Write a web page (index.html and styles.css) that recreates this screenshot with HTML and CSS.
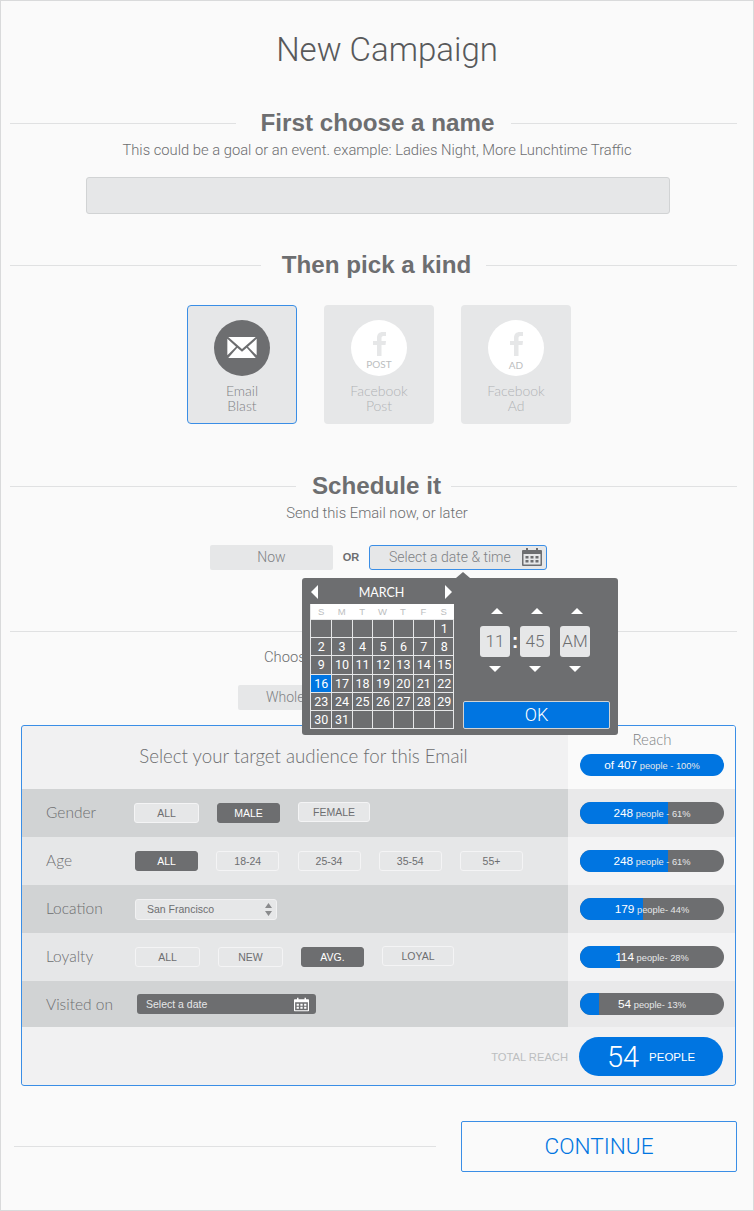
FILE: index.html
```html
<!DOCTYPE html>
<html lang="en">
<head>
    <meta charset="UTF-8">
    <meta name="viewport" content="width=device-width, initial-scale=1.0">
    <title>New Campaign</title>
    <link rel="stylesheet" href="styles.css">
</head>
<body>
<div class="page">
    <h1 class="page-title">New Campaign</h1>

    <!-- name -->
    <h2 class="step-head step-name"><span>First choose a name</span></h2>
    <p class="step-sub">This could be a goal or an event. example: Ladies Night, More Lunchtime Traffic</p>
    <div class="name-input"></div>

    <!-- kind -->
    <h2 class="step-head step-kind"><span>Then pick a kind</span></h2>
    <div class="kinds">
        <div class="kind kind-on">
            <div class="kind-icon icon-dark">
                <svg width="30" height="22" viewBox="0 0 32 24"><path fill="#fff" d="M1 0h30L16 13zM0 2l9.500 8.500L0 20zM32 2v18l-9.500-9.500zM10.800 11.700 16 16l5.200-4.300L31 23H1z"/></svg>
            </div>
            <div class="kind-label">Email<br>Blast</div>
        </div>
        <div class="kind">
            <div class="kind-icon">
                <svg class="fb" width="13" height="24" viewBox="0 0 13 24"><path fill="#e6e7e8" d="M4 24V13H0V9h4V6c0-4 2-6 6-6h3v4h-2C9.500 4 8.500 4.500 8.500 6v3H13l-.5 4h-4v11z"/></svg>
                <span class="fb-tag">POST</span>
            </div>
            <div class="kind-label">Facebook<br>Post</div>
        </div>
        <div class="kind">
            <div class="kind-icon">
                <svg class="fb" width="13" height="24" viewBox="0 0 13 24"><path fill="#e6e7e8" d="M4 24V13H0V9h4V6c0-4 2-6 6-6h3v4h-2C9.500 4 8.500 4.500 8.500 6v3H13l-.5 4h-4v11z"/></svg>
                <span class="fb-tag fb-tag-ad">AD</span>
            </div>
            <div class="kind-label">Facebook<br>Ad</div>
        </div>
    </div>

    <!-- schedule -->
    <h2 class="step-head step-sched"><span>Schedule it</span></h2>
    <p class="step-sub">Send this Email now, or later</p>
    <div class="sched-row">
        <div class="now-btn">Now</div>
        <div class="or">OR</div>
        <div class="date-btn">
            Select a date &amp; time
            <svg class="cal" width="20" height="18" viewBox="0 0 20 18"><path fill="#6d6e70" d="M1 2h3V0h2v2h8V0h2v2h3a1 1 0 0 1 1 1v14a1 1 0 0 1-1 1H1a1 1 0 0 1-1-1V3a1 1 0 0 1 1-1zm.500 4v10.500h17V6z"/><path fill="#6d6e70" d="M3.500 8h3v2.500h-3zM8.500 8h3v2.500h-3zM13.500 8h3v2.500h-3zM3.500 12h3v2.500h-3zM8.500 12h3v2.500h-3zM13.500 12h3v2.500h-3z"/></svg>
        </div>

        <!-- date picker open over the page -->
        <div class="picker">
            <div class="picker-notch"></div>
            <div class="cal-side">
                <div class="month-bar">
                    <span class="tri tri-left"></span>
                    <span>MARCH</span>
                    <span class="tri tri-right"></span>
                </div>
                <div class="cal-grid" id="cal-grid"></div>
            </div>
            <div class="time-side">
                <div class="time-cols">
                    <div class="time-col">
                        <span class="tri tri-up"></span>
                        <div class="time-box">11</div>
                        <span class="tri tri-down"></span>
                    </div>
                    <div class="time-colon">:</div>
                    <div class="time-col">
                        <span class="tri tri-up"></span>
                        <div class="time-box">45</div>
                        <span class="tri tri-down"></span>
                    </div>
                    <div class="time-col time-col-ampm">
                        <span class="tri tri-up"></span>
                        <div class="time-box">AM</div>
                        <span class="tri tri-down"></span>
                    </div>
                </div>
                <div class="ok-btn">OK</div>
            </div>
        </div>
    </div>

    <div class="divider"></div>
    <p class="choose-text">Choose</p>
    <div class="choose-row">
        <div class="whole-btn">Whole</div>
    </div>

    <!-- audience -->
    <div class="audience">
        <div class="aud-row aud-head">
            <div class="aud-left aud-title">Select your target audience for this Email</div>
            <div class="aud-right">
                <div class="reach-title">Reach</div>
                <div class="bar"><div class="bar-text"><b>of 407</b> people - 100%</div></div>
            </div>
        </div>
        <div class="aud-row row-dark row-gender">
            <div class="aud-left">
                <div class="aud-label">Gender</div>
                <div class="opt opt-w65">ALL</div>
                <div class="opt opt-w63 opt-on">MALE</div>
                <div class="opt opt-w72 opt-up">FEMALE</div>
            </div>
            <div class="aud-right">
                <div class="bar"><div class="bar-fill" style="width:61%"></div><div class="bar-text"><b>248</b> people - 61%</div></div>
            </div>
        </div>
        <div class="aud-row row-light row-age">
            <div class="aud-left">
                <div class="aud-label">Age</div>
                <div class="opt opt-w63 opt-on">ALL</div>
                <div class="opt opt-w63">18-24</div>
                <div class="opt opt-w63">25-34</div>
                <div class="opt opt-w63">35-54</div>
                <div class="opt opt-w63">55+</div>
            </div>
            <div class="aud-right">
                <div class="bar"><div class="bar-fill" style="width:61%"></div><div class="bar-text"><b>248</b> people - 61%</div></div>
            </div>
        </div>
        <div class="aud-row row-dark">
            <div class="aud-left">
                <div class="aud-label">Location</div>
                <div class="loc-select">
                    San Francisco
                    <svg width="7" height="13" viewBox="0 0 7 13"><path fill="#8a8b8d" d="M3.500 0 7 5H0zM0 8h7l-3.500 5z"/></svg>
                </div>
            </div>
            <div class="aud-right">
                <div class="bar"><div class="bar-fill" style="width:44%"></div><div class="bar-text"><b>179</b> people- 44%</div></div>
            </div>
        </div>
        <div class="aud-row row-light">
            <div class="aud-left">
                <div class="aud-label">Loyalty</div>
                <div class="opt opt-w65">ALL</div>
                <div class="opt opt-w65">NEW</div>
                <div class="opt opt-w63 opt-on">AVG.</div>
                <div class="opt opt-w72 opt-up">LOYAL</div>
            </div>
            <div class="aud-right">
                <div class="bar"><div class="bar-fill" style="width:28%"></div><div class="bar-text"><b>114</b> people- 28%</div></div>
            </div>
        </div>
        <div class="aud-row row-dark row-visited">
            <div class="aud-left">
                <div class="aud-label">Visited on</div>
                <div class="visit-date">
                    Select a date
                    <svg width="15" height="15" viewBox="0 0 20 18"><path fill="#fff" d="M1 2h3V0h2v2h8V0h2v2h3a1 1 0 0 1 1 1v14a1 1 0 0 1-1 1H1a1 1 0 0 1-1-1V3a1 1 0 0 1 1-1zm.500 4v10.500h17V6z"/><path fill="#fff" d="M3.500 8h3v2.500h-3zM8.500 8h3v2.500h-3zM13.500 8h3v2.500h-3zM3.500 12h3v2.500h-3zM8.500 12h3v2.500h-3zM13.500 12h3v2.500h-3z"/></svg>
                </div>
            </div>
            <div class="aud-right">
                <div class="bar"><div class="bar-fill" style="width:13%"></div><div class="bar-text"><b>54</b> people- 13%</div></div>
            </div>
        </div>
        <div class="aud-foot">
            <span class="total-label">TOTAL REACH</span>
            <div class="total-pill"><span class="total-num">54</span><span class="total-word">PEOPLE</span></div>
        </div>
    </div>

    <div class="continue-row">
        <div class="continue-line"></div>
        <div class="continue-btn">CONTINUE</div>
    </div>
</div>

<script>
    // draw the March calendar
    const calGrid = document.getElementById('cal-grid');
    ['S', 'M', 'T', 'W', 'T', 'F', 'S'].forEach(d => {
        const el = document.createElement('div');
        el.className = 'cal-dow';
        el.textContent = d;
        calGrid.appendChild(el);
    });
    for (let i = 0; i < 42; i++) {
        const day = i - 5;
        const el = document.createElement('div');
        el.className = 'cal-day';
        if (day >= 1 && day <= 31) el.textContent = day;
        if (day === 16) el.classList.add('cal-sel');
        calGrid.appendChild(el);
    }
</script>
</body>
</html>
```
FILE: styles.css
```css
* {
    box-sizing: border-box;
}
body {
    margin: 0;
    background-color: #fafafa;
    font-family: 'Liberation Sans', Arial, sans-serif;
    color: #6d6e70;
}
.page {
    width: 754px;
    height: 1211px;
    border: 1px solid #d9dadb;
    overflow: hidden;
}
.page-title {
    margin: 30px 0 0;
    padding-left: 20px;
    height: 38px;
    line-height: 38px;
    font-family: Roboto, sans-serif;
    font-weight: 300;
    font-size: 33px;
    color: #58595b;
    text-align: center;
}

/* section headings with a rule each side */
.step-head {
    display: flex;
    align-items: center;
    margin: 0 16px 0 9px;
    height: 30px;
    font-size: 24.200px;
    font-weight: 700;
    color: #6d6e70;
    justify-content: center;
}
.step-head::before, .step-head::after {
    content: '';
    flex: 1;
    height: 1px;
    background-color: #e0e1e2;
}
.step-name { margin-top: 39px; }
.step-name span { padding: 0 17px 0 25px; }
.step-kind { margin-top: 36px; }
.step-kind span { padding: 0 15px 0 21px; }
.step-sched { margin-top: 47px; }
.step-sched span { padding: 0 10px 0 16px; }
.step-sub {
    margin: 2px 0 0;
    height: 20px;
    line-height: 20px;
    font-family: Roboto, sans-serif;
    font-weight: 300;
    font-size: 14.750px;
    color: #6d6e70;
    text-align: center;
}
.name-input {
    width: 584px;
    height: 37px;
    margin: 17px 0 0 85px;
    background-color: #e6e7e8;
    border: 1px solid #d1d3d4;
    border-radius: 3px;
}

/* kind cards */
.kinds {
    display: flex;
    gap: 27px;
    margin: 25px 0 0 186px;
}
.kind {
    width: 110px;
    height: 119px;
    padding-top: 15px;
    background-color: #e6e7e8;
    border-radius: 4px;
    color: #b1b3b6;
    text-align: center;
}
.kind-on {
    border: 1px solid #3a8ee6;
    padding-top: 14px;
    color: #808285;
}
.kind-icon {
    position: relative;
    width: 56px;
    height: 56px;
    margin: 0 auto;
    border-radius: 50%;
    background-color: #fff;
    display: flex;
    align-items: center;
    justify-content: center;
}
.icon-dark {
    background-color: #6d6e70;
}
.fb {
    margin-top: -8px;
}
.fb-tag {
    position: absolute;
    left: 0;
    right: 0;
    bottom: 6px;
    font-family: Lato, sans-serif;
    font-size: 10px;
    line-height: 12px;
    color: #bcbec0;
}
.fb-tag-ad {
    bottom: 5px;
}
.kind-label {
    margin-top: 7px;
    font-family: Lato, sans-serif;
    font-weight: 300;
    font-size: 14px;
    line-height: 15px;
}

/* schedule row + picker */
.sched-row {
    position: relative;
    display: flex;
    align-items: center;
    height: 26px;
    margin: 21px 0 0 209px;
}
.now-btn {
    width: 123px;
    height: 25px;
    line-height: 24px;
    background-color: #e6e7e8;
    border-radius: 2px;
    font-family: Roboto, sans-serif;
    font-weight: 300;
    font-size: 14px;
    color: #808285;
    text-align: center;
}
.or {
    width: 36px;
    font-size: 11px;
    font-weight: 700;
    color: #6d6e70;
    text-align: center;
}
.date-btn {
    display: flex;
    align-items: center;
    justify-content: space-between;
    width: 178px;
    height: 25px;
    padding: 0 4px 0 19px;
    background-color: #e6e7e8;
    border: 1px solid #3a8ee6;
    border-radius: 3px;
    font-family: Roboto, sans-serif;
    font-weight: 300;
    font-size: 14px;
    color: #808285;
}
.picker {
    position: absolute;
    left: 92px;
    top: 34px;
    z-index: 5;
    display: flex;
    width: 316px;
    height: 157px;
    padding: 3px 8px 0;
    background-color: #6d6e70;
    border-radius: 3px;
    color: #fff;
}
.picker-notch {
    position: absolute;
    left: 154px;
    top: -6px;
    border-left: 7px solid transparent;
    border-right: 7px solid transparent;
    border-bottom: 6px solid #6d6e70;
}
.cal-side {
    width: 144px;
}
.month-bar {
    display: flex;
    align-items: center;
    justify-content: space-between;
    height: 22px;
    font-family: Lato, sans-serif;
    font-size: 12.500px;
    padding: 0 0 0 1px;
}
.tri {
    display: block;
    width: 0;
    height: 0;
}
.tri-left {
    border-top: 7px solid transparent;
    border-bottom: 7px solid transparent;
    border-right: 7px solid #fff;
}
.tri-right {
    border-top: 7px solid transparent;
    border-bottom: 7px solid transparent;
    border-left: 7px solid #fff;
    margin-right: 2px;
}
.tri-up {
    border-left: 6.500px solid transparent;
    border-right: 6.500px solid transparent;
    border-bottom: 6px solid #fff;
}
.tri-down {
    border-left: 6.500px solid transparent;
    border-right: 6.500px solid transparent;
    border-top: 6px solid #fff;
}
.cal-grid {
    display: grid;
    grid-template-columns: repeat(7, 20.430px);
    grid-template-rows: 15px repeat(6, 18.200px);
    width: 144px;
    margin-top: 1px;
    border: 1px solid #e6e7e8;
    border-top: 0;
    background-color: #6d6e70;
}
.cal-dow {
    background-color: #fff;
    font-size: 9.500px;
    line-height: 15px;
    color: #bcbec0;
    text-align: center;
}
.cal-day {
    border-top: 1px solid #e6e7e8;
    border-left: 1px solid #e6e7e8;
    font-family: Roboto, sans-serif;
    font-size: 12.500px;
    font-weight: 400;
    line-height: 17px;
    text-align: center;
}
.cal-day:nth-child(7n+1) {
    border-left: 0;
}
.cal-sel {
    background-color: #0075e1;
}
.time-side {
    position: relative;
    flex: 1;
    padding-left: 9px;
}
.time-cols {
    display: flex;
    padding: 27px 0 0 17px;
}
.time-col {
    display: flex;
    flex-direction: column;
    align-items: center;
    width: 30px;
}
.time-col .tri-up {
    margin: 0 0 12px 3px;
}
.time-col .tri-down {
    margin-top: 9px;
}
.time-col-ampm {
    margin-left: 10px;
}
.time-box {
    width: 30px;
    height: 31px;
    line-height: 31px;
    background-color: #e6e7e8;
    border-radius: 3px;
    font-family: Roboto, sans-serif;
    font-weight: 300;
    font-size: 17px;
    color: #6d6e70;
    text-align: center;
}
.time-colon {
    width: 10px;
    margin-top: 18px;
    font-size: 20px;
    font-weight: 700;
    line-height: 31px;
    text-align: center;
}
.ok-btn {
    position: absolute;
    left: 9px;
    right: 0;
    top: 120px;
    height: 28px;
    line-height: 26px;
    background-color: #0075e1;
    border: 1px solid #d1d3d4;
    border-radius: 2px;
    font-family: Roboto, sans-serif;
    font-weight: 300;
    font-size: 18px;
    text-align: center;
}

/* behind the picker */
.divider {
    height: 1px;
    margin: 61px 16px 0 9px;
    background-color: #e0e1e2;
}
.choose-text {
    margin: 15px 0 0 263px;
    height: 20px;
    line-height: 20px;
    font-family: Roboto, sans-serif;
    font-weight: 300;
    font-size: 14.750px;
    color: #6d6e70;
}
.choose-row {
    margin: 18px 0 0 237px;
}
.whole-btn {
    width: 123px;
    height: 25px;
    padding-left: 28px;
    line-height: 24px;
    background-color: #e6e7e8;
    border-radius: 2px;
    font-family: Roboto, sans-serif;
    font-weight: 300;
    font-size: 14px;
    color: #808285;
}

/* audience panel */
.audience {
    width: 715px;
    height: 361px;
    margin: 15px 0 0 20px;
    border: 1px solid #3a8ee6;
    border-radius: 3px;
    background-color: #f1f1f2;
    overflow: hidden;
}
.aud-row {
    display: flex;
    height: 48px;
}
.aud-head {
    height: 63px;
}
.aud-left {
    display: flex;
    align-items: center;
    flex: none;
    width: 546px;
    padding-left: 24px;
}
.aud-right {
    display: flex;
    flex-direction: column;
    justify-content: center;
    flex: 1;
    padding: 0 11px 0 12px;
}
.aud-head .aud-right {
    justify-content: flex-start;
    background-color: #fafafa;
}
.aud-title {
    justify-content: center;
    padding: 0 0 3px 17px;
    font-family: Lato, sans-serif;
    font-weight: 300;
    font-size: 18.700px;
    color: #6d6e70;
}
.reach-title {
    height: 28px;
    line-height: 26px;
    font-family: Lato, sans-serif;
    font-weight: 300;
    font-size: 15px;
    color: #808285;
    text-align: center;
}
.row-dark .aud-left {
    background-color: #d1d3d4;
}
.row-dark .aud-right {
    background-color: #e9e9ea;
}
.row-light .aud-left {
    background-color: #e6e7e8;
}
.row-light .aud-right {
    background-color: #f3f3f4;
}
.row-visited {
    height: 46px;
}
.aud-label {
    width: 89px;
    padding-bottom: 3px;
    font-family: Lato, sans-serif;
    font-weight: 300;
    font-size: 15.500px;
    color: #6d6e70;
}
.row-gender .aud-label {
    width: 88px;
}
.row-visited .aud-label {
    padding-bottom: 0;
}
.opt {
    height: 20px;
    margin-right: 18px;
    line-height: 19px;
    background-color: #e6e7e8;
    border: 1px solid #f4f4f5;
    border-radius: 3px;
    font-size: 10.500px;
    color: #6d6e70;
    text-align: center;
}
.row-age .opt {
    margin-right: 18.250px;
}
.opt-w65 { width: 65px; }
.opt-w63 { width: 63px; }
.opt-w72 { width: 72px; }
.opt-up { position: relative; top: -1px; }
.opt-on {
    background-color: #6d6e70;
    border-color: #6d6e70;
    color: #fff;
}
.loc-select {
    display: flex;
    align-items: center;
    justify-content: space-between;
    width: 142px;
    height: 21px;
    padding: 0 4px 0 11px;
    background-color: #e6e7e8;
    border: 1px solid #f1f1f2;
    border-radius: 3px;
    font-size: 10.500px;
    color: #6d6e70;
}
.visit-date {
    display: flex;
    align-items: center;
    justify-content: space-between;
    width: 179px;
    height: 20px;
    margin-left: 2px;
    padding: 0 7px 0 9px;
    background-color: #6d6e70;
    border-radius: 3px;
    font-size: 10.500px;
    color: #e6e7e8;
}

/* reach bars */
.bar {
    position: relative;
    height: 22px;
    border-radius: 11px;
    background-color: #6d6e70;
    overflow: hidden;
}
.aud-head .bar {
    background-color: #0075e1;
}
.bar-fill {
    height: 100%;
    background-color: #0075e1;
}
.bar-text {
    position: absolute;
    left: 0;
    right: 0;
    top: 0;
    line-height: 22px;
    font-size: 9.300px;
    color: #e6e7e8;
    text-align: center;
}
.bar-text b {
    font-size: 11.800px;
    font-weight: 400;
    color: #fff;
}
.aud-foot {
    display: flex;
    align-items: center;
    justify-content: flex-end;
    height: 57px;
    padding: 2px 12px 0 0;
    background-color: #f1f1f2;
}
.total-label {
    margin-right: 11px;
    font-size: 11.200px;
    color: #bcbec0;
}
.total-pill {
    display: flex;
    align-items: center;
    justify-content: center;
    gap: 10px;
    width: 144px;
    height: 39px;
    border-radius: 20px;
    background-color: #0075e1;
    color: #fff;
}
.total-num {
    font-family: Roboto, sans-serif;
    font-weight: 300;
    font-size: 29px;
}
.total-word {
    font-size: 11.500px;
}

/* bottom */
.continue-row {
    display: flex;
    align-items: center;
    margin: 35px 0 0 13px;
}
.continue-line {
    width: 422px;
    height: 1px;
    background-color: #e0e1e2;
}
.continue-btn {
    width: 276px;
    height: 51px;
    margin-left: 25px;
    line-height: 49px;
    border: 1px solid #3a8ee6;
    border-radius: 2px;
    font-family: Roboto, sans-serif;
    font-weight: 300;
    font-size: 22.600px;
    color: #0075e1;
    text-align: center;
}
```
